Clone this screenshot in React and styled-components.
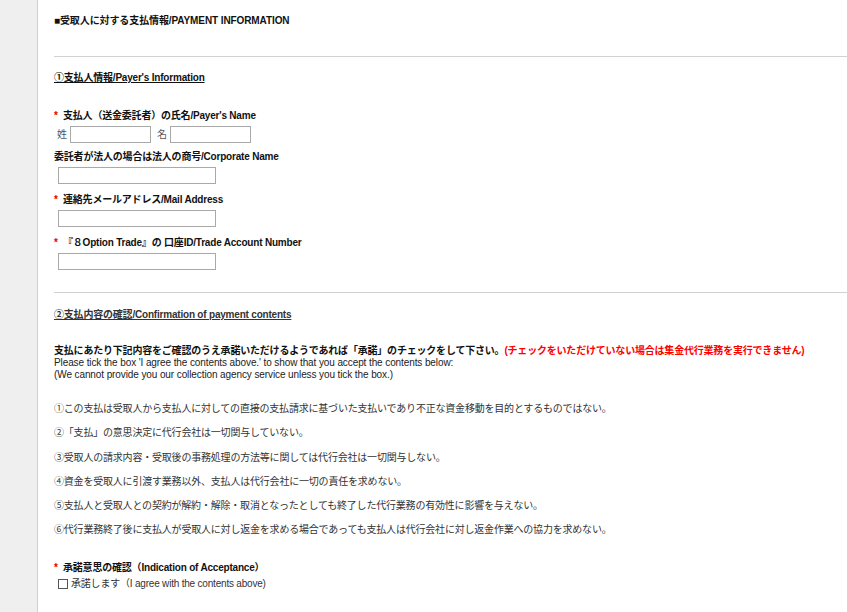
import React from 'react';
import styled, { createGlobalStyle } from 'styled-components';

const GlobalStyle = createGlobalStyle`
    html, body {
        margin: 0;
        padding: 0;
        background: #ffffff;
    }
    body {
        font-family: "Liberation Sans", "Noto Sans CJK JP", sans-serif;
        font-size: 10px;
        letter-spacing: -0.2px;
        color: #111;
    }
`;

const Page = styled.div`
    display: flex;
    min-height: 612px;
`;

const Sidebar = styled.div`
    width: 37px;
    flex: none;
    background: #efefef;
    border-right: 1px solid #cfcfcf;
`;

const Content = styled.div`
    flex: 1;
    padding: 14px 0 0 16px;
`;

const Title = styled.div`
    font-weight: bold;
    line-height: 14px;
    letter-spacing: -0.1px;
`;

const Rule = styled.div`
    height: 1px;
    background: #d2d2d2;
    margin-top: ${(p) => p.top}px;
`;

const SectionHeading = styled.div`
    font-weight: bold;
    line-height: 14px;
    text-decoration: underline;
    color: ${(p) => p.color || '#111'};
    margin-top: ${(p) => p.top}px;
`;

const Label = styled.div`
    font-weight: bold;
    line-height: 14px;
    margin-top: ${(p) => p.top}px;
`;

const Required = styled.span`
    display: inline-block;
    width: 9px;
    color: #e60000;
`;

const NameRow = styled.div`
    display: flex;
    align-items: center;
    margin-top: 3px;
    padding-left: 3px;
    color: #555;
`;

const NamePart = styled.span`
    width: 10px;
    margin-right: 3px;
    margin-left: ${(p) => p.gap || 0}px;
    line-height: 17px;
`;

const TextInput = styled.input`
    box-sizing: border-box;
    display: block;
    width: ${(p) => p.w}px;
    height: 17px;
    margin: ${(p) => (p.block ? '3px 0 0 4px' : '0')};
    padding: 0 2px;
    border: 1px solid #a9a9a9;
    background: #fff;
    font: inherit;
    outline: none;
`;

const Notice = styled.div`
    margin-top: 22px;
`;

const NoticeLead = styled.div`
    font-weight: bold;
    line-height: 13px;
`;

const Warning = styled.span`
    color: #ff0000;
`;

const NoticeLine = styled.div`
    line-height: 12px;
    color: #222;
    letter-spacing: -0.1px;
`;

const Terms = styled.ol`
    list-style: none;
    margin: 16px 0 0;
    padding: 0;
`;

const Term = styled.li`
    line-height: 24.3px;
    color: #333;
`;

const CheckRow = styled.label`
    display: flex;
    align-items: center;
    margin-top: 1px;
    padding-left: 4px;
    line-height: 16px;
    color: #333;
`;

const CheckBox = styled.span`
    box-sizing: border-box;
    width: 10px;
    height: 10px;
    border: 1px solid #555;
    margin-right: 3px;
`;

const terms = [
    '①この支払は受取人から支払人に対しての直接の支払請求に基づいた支払いであり不正な資金移動を目的とするものではない。',
    '②「支払」の意思決定に代行会社は一切関与していない。',
    '③受取人の請求内容・受取後の事務処理の方法等に関しては代行会社は一切関与しない。',
    '④資金を受取人に引渡す業務以外、支払人は代行会社に一切の責任を求めない。',
    '⑤支払人と受取人との契約が解約・解除・取消となったとしても終了した代行業務の有効性に影響を与えない。',
    '⑥代行業務終了後に支払人が受取人に対し返金を求める場合であっても支払人は代行会社に対し返金作業への協力を求めない。'
];

const App = () => (
    <>
        <GlobalStyle />
        <Page>
            <Sidebar />
            <Content>
                <Title>■受取人に対する支払情報/PAYMENT INFORMATION</Title>
                <Rule top={28} />

                <SectionHeading top={14}>①支払人情報/Payer's Information</SectionHeading>

                <Label top={24}>
                    <Required>*</Required>支払人（送金委託者）の氏名/Payer's Name
                </Label>
                <NameRow>
                    <NamePart>姓</NamePart>
                    <TextInput w={81} />
                    <NamePart gap={6}>名</NamePart>
                    <TextInput w={81} />
                </NameRow>

                <Label top={7}>委託者が法人の場合は法人の商号/Corporate Name</Label>
                <TextInput block w={158} />

                <Label top={9}>
                    <Required>*</Required>連絡先メールアドレス/Mail Address
                </Label>
                <TextInput block w={158} />

                <Label top={9}>
                    <Required>*</Required>『８Option Trade』の 口座ID/Trade Account Number
                </Label>
                <TextInput block w={158} />

                <Rule top={22} />

                <SectionHeading top={15} color="#333">
                    ②支払内容の確認/Confirmation of payment contents
                </SectionHeading>

                <Notice>
                    <NoticeLead>
                        支払にあたり下記内容をご確認のうえ承諾いただけるようであれば「承諾」のチェックをして下さい。
                        <Warning>(チェックをいただけていない場合は集金代行業務を実行できません)</Warning>
                    </NoticeLead>
                    <NoticeLine>
                        Please tick the box 'I agree the contents above.' to show that you accept the contents below:
                    </NoticeLine>
                    <NoticeLine>(We cannot provide you our collection agency service unless you tick the box.)</NoticeLine>
                </Notice>

                <Terms>
                    {terms.map((t) => (
                        <Term key={t}>{t}</Term>
                    ))}
                </Terms>

                <Label top={18}>
                    <Required>*</Required>承諾意思の確認（Indication of Acceptance）
                </Label>
                <CheckRow>
                    <CheckBox />
                    承諾します（I agree with the contents above)
                </CheckRow>
            </Content>
        </Page>
    </>
);

export default App;
